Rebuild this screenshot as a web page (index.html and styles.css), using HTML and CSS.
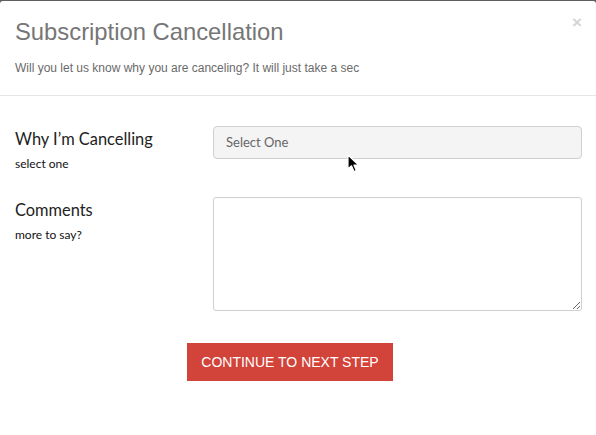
FILE: index.html
```html
<!DOCTYPE html>
<html>
<head>
<meta charset="utf-8">
<link rel="stylesheet" href="styles.css">
</head>
<body>
<div class="modal">
  <div class="modal-header">
    <h1 class="title">Subscription Cancellation</h1>
    <span class="close">&times;</span>
    <p class="subtitle">Will you let us know why you are canceling? It will just take a sec</p>
  </div>
  <div class="modal-body">
    <div class="row row-select">
      <div class="label-col">
        <div class="label">Why I’m Cancelling</div>
        <div class="hint">select one</div>
      </div>
      <div class="field-col">
        <div class="select">Select One</div>
      </div>
    </div>
    <div class="row row-text">
      <div class="label-col">
        <div class="label">Comments</div>
        <div class="hint">more to say?</div>
      </div>
      <div class="field-col">
        <textarea class="textarea"></textarea>
      </div>
    </div>
    <div class="actions">
      <button class="btn">CONTINUE TO NEXT STEP</button>
    </div>
  </div>
  <svg class="cursor" width="14" height="20" viewBox="0 0 14 20">
    <path d="M1 1 L1 15 L4.5 11.8 L7 17.5 L9.3 16.5 L6.9 11 L11.5 11 Z" fill="#000" stroke="#fff" stroke-width="1.2" stroke-linejoin="round"/>
  </svg>
</div>
</body>
</html>
```
FILE: styles.css
```css
html, body {
  margin: 0;
  padding: 0;
}
body {
  background: #5e5e5e;
  width: 596px;
  height: 435px;
  overflow: hidden;
}
.modal {
  position: relative;
  margin-top: 1px;
  height: 434px;
  background: #ffffff;
  border-radius: 3px 3px 0 0;
}
.modal-header {
  position: relative;
  padding: 19px 15px 18px 15px;
  border-bottom: 1px solid #e5e5e5;
}
.title {
  margin: 0;
  font-family: "Liberation Sans", Arial, sans-serif;
  font-weight: normal;
  font-size: 23.8px;
  line-height: 24px;
  color: #767676;
}
.close {
  position: absolute;
  top: 12px;
  right: 14px;
  font-family: "Liberation Sans", Arial, sans-serif;
  font-size: 17px;
  font-weight: bold;
  line-height: 20px;
  color: #d4d4d4;
}
.subtitle {
  margin: 16px 0 0 0;
  font-family: "Liberation Sans", Arial, sans-serif;
  font-size: 12px;
  line-height: 17px;
  color: #6a6a6a;
}
.modal-body {
  padding: 30px 15px 0 15px;
}
.row {
  display: flex;
  align-items: flex-start;
}
.row-select {
  margin-bottom: 26px;
}
.row-text {
  margin-bottom: 32px;
}
.label-col {
  width: 198px;
  flex: none;
}
.field-col {
  flex: 1;
}
.label {
  margin-top: 3px;
  font-family: Lato, "Open Sans", sans-serif;
  font-size: 16.4px;
  line-height: 20px;
  color: #222;
}
.hint {
  margin-top: 7px;
  font-family: Lato, "Open Sans", sans-serif;
  font-size: 12px;
  line-height: 15px;
  color: #111;
}
.select {
  box-sizing: border-box;
  height: 33px;
  width: 369px;
  padding: 0 12px;
  background: #f4f4f4;
  border: 1px solid #cfcfcf;
  border-radius: 4px;
  font-family: Lato, "Open Sans", sans-serif;
  font-size: 13px;
  line-height: 31px;
  color: #666;
}
.textarea {
  display: block;
  box-sizing: border-box;
  width: 369px;
  height: 114px;
  margin: 0;
  border: 1px solid #cfcfcf;
  border-radius: 3px;
  background: #fff;
  resize: vertical;
  outline: none;
}
.actions {
  padding-left: 172px;
}
.btn {
  display: block;
  width: 206px;
  height: 38px;
  padding: 0;
  border: 0;
  border-radius: 0;
  background: #d2433a;
  color: #fff;
  font-family: "Liberation Sans", Arial, sans-serif;
  font-size: 14px;
  line-height: 38px;
  text-align: center;
}
.cursor {
  position: absolute;
  left: 347px;
  top: 153px;
}
```
